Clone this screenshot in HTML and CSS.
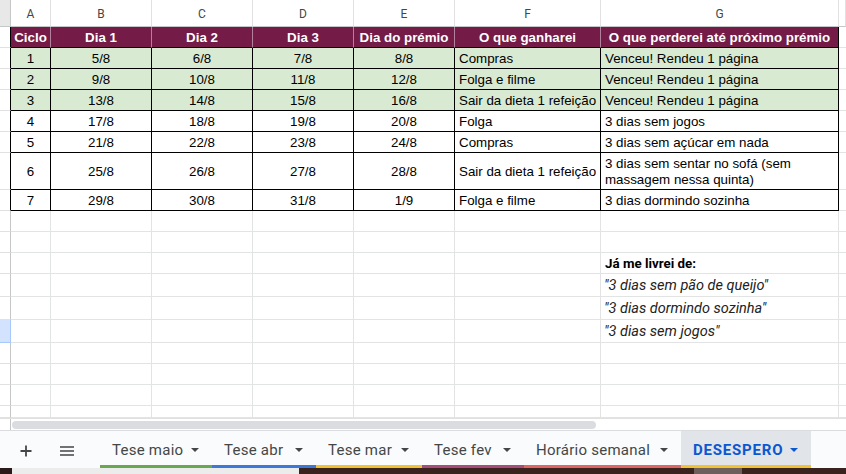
FILE: index.html
```html
<!DOCTYPE html>
<html lang="pt">
<head>
<meta charset="utf-8">
<title>DESESPERO</title>
<link rel="stylesheet" href="styles.css">
</head>
<body>
<div class="app">
  <div class="sheet">
    <div class="row r-colhdr">
      <div class="corner"></div>
      <div class="ch">A</div><div class="ch">B</div><div class="ch">C</div><div class="ch">D</div><div class="ch">E</div><div class="ch">F</div><div class="ch">G</div><div class="ch"></div>
    </div>
    <div class="row r21">
      <div class="rh tb"></div>
      <div class="c hd ctr">Ciclo</div><div class="c hd ctr">Dia 1</div><div class="c hd ctr">Dia 2</div><div class="c hd ctr">Dia 3</div><div class="c hd ctr">Dia do prémio</div><div class="c hd ctr">O que ganharei</div><div class="c hd ctr hd-last">O que perderei até próximo prémio</div><div class="c"></div>
    </div>
    <div class="row r21">
      <div class="rh tb"></div>
      <div class="c t g ctr">1</div><div class="c t g ctr">5/8</div><div class="c t g ctr">6/8</div><div class="c t g ctr">7/8</div><div class="c t g ctr">8/8</div><div class="c t g">Compras</div><div class="c t g">Venceu! Rendeu 1 página</div><div class="c"></div>
    </div>
    <div class="row r21">
      <div class="rh tb"></div>
      <div class="c t g ctr">2</div><div class="c t g ctr">9/8</div><div class="c t g ctr">10/8</div><div class="c t g ctr">11/8</div><div class="c t g ctr">12/8</div><div class="c t g">Folga e filme</div><div class="c t g">Venceu! Rendeu 1 página</div><div class="c"></div>
    </div>
    <div class="row r21">
      <div class="rh tb"></div>
      <div class="c t g ctr">3</div><div class="c t g ctr">13/8</div><div class="c t g ctr">14/8</div><div class="c t g ctr">15/8</div><div class="c t g ctr">16/8</div><div class="c t g">Sair da dieta 1 refeição</div><div class="c t g">Venceu! Rendeu 1 página</div><div class="c"></div>
    </div>
    <div class="row r21">
      <div class="rh tb"></div>
      <div class="c t ctr">4</div><div class="c t ctr">17/8</div><div class="c t ctr">18/8</div><div class="c t ctr">19/8</div><div class="c t ctr">20/8</div><div class="c t">Folga</div><div class="c t">3 dias sem jogos</div><div class="c"></div>
    </div>
    <div class="row r21">
      <div class="rh tb"></div>
      <div class="c t ctr">5</div><div class="c t ctr">21/8</div><div class="c t ctr">22/8</div><div class="c t ctr">23/8</div><div class="c t ctr">24/8</div><div class="c t">Compras</div><div class="c t">3 dias sem açúcar em nada</div><div class="c"></div>
    </div>
    <div class="row r37">
      <div class="rh tb"></div>
      <div class="c t ctr">6</div><div class="c t ctr">25/8</div><div class="c t ctr">26/8</div><div class="c t ctr">27/8</div><div class="c t ctr">28/8</div><div class="c t">Sair da dieta 1 refeição</div><div class="c t wrap">3 dias sem sentar no sofá (sem massagem nessa quinta)</div><div class="c"></div>
    </div>
    <div class="row r21">
      <div class="rh tb"></div>
      <div class="c t ctr">7</div><div class="c t ctr">29/8</div><div class="c t ctr">30/8</div><div class="c t ctr">31/8</div><div class="c t ctr">1/9</div><div class="c t">Folga e filme</div><div class="c t">3 dias dormindo sozinha</div><div class="c"></div>
    </div>
    <div class="row r21">
      <div class="rh"></div><div class="c"></div><div class="c"></div><div class="c"></div><div class="c"></div><div class="c"></div><div class="c"></div><div class="c"></div><div class="c"></div>
    </div>
    <div class="row r21">
      <div class="rh"></div><div class="c"></div><div class="c"></div><div class="c"></div><div class="c"></div><div class="c"></div><div class="c"></div><div class="c"></div><div class="c"></div>
    </div>
    <div class="row r21">
      <div class="rh"></div><div class="c"></div><div class="c"></div><div class="c"></div><div class="c"></div><div class="c"></div><div class="c"></div><div class="c note-title">Já me livrei de:</div><div class="c"></div>
    </div>
    <div class="row r23">
      <div class="rh"></div><div class="c"></div><div class="c"></div><div class="c"></div><div class="c"></div><div class="c"></div><div class="c"></div><div class="c note">"3 dias sem pão de queijo"</div><div class="c"></div>
    </div>
    <div class="row r23">
      <div class="rh"></div><div class="c"></div><div class="c"></div><div class="c"></div><div class="c"></div><div class="c"></div><div class="c"></div><div class="c note">"3 dias dormindo sozinha"</div><div class="c"></div>
    </div>
    <div class="row r23">
      <div class="rh sel"></div><div class="c"></div><div class="c"></div><div class="c"></div><div class="c"></div><div class="c"></div><div class="c"></div><div class="c note">"3 dias sem jogos"</div><div class="c"></div>
    </div>
    <div class="row r21">
      <div class="rh"></div><div class="c"></div><div class="c"></div><div class="c"></div><div class="c"></div><div class="c"></div><div class="c"></div><div class="c"></div><div class="c"></div>
    </div>
    <div class="row r21">
      <div class="rh"></div><div class="c"></div><div class="c"></div><div class="c"></div><div class="c"></div><div class="c"></div><div class="c"></div><div class="c"></div><div class="c"></div>
    </div>
    <div class="row r21">
      <div class="rh"></div><div class="c"></div><div class="c"></div><div class="c"></div><div class="c"></div><div class="c"></div><div class="c"></div><div class="c"></div><div class="c"></div>
    </div>
    <div class="row r12">
      <div class="rh"></div><div class="c"></div><div class="c"></div><div class="c"></div><div class="c"></div><div class="c"></div><div class="c"></div><div class="c"></div><div class="c"></div>
    </div>
  </div>

  <div class="hscroll">
    <div class="hs-left"></div>
    <div class="hs-thumb"></div>
  </div>

  <div class="tabs">
    <div class="icon-btn add">
      <svg width="12" height="12" viewBox="0 0 12 12"><path d="M6 0.5V11.5M0.5 6H11.5" stroke="#444746" stroke-width="1.8" fill="none"/></svg>
    </div>
    <div class="icon-btn menu">
      <svg width="14" height="10" viewBox="0 0 14 10"><path d="M0 1H14M0 5H14M0 9H14" stroke="#444746" stroke-width="1.6" fill="none"/></svg>
    </div>
    <div class="tab tab-green"><span>Tese maio</span><svg class="arr" width="8" height="4" viewBox="0 0 8 4"><polygon points="0,0 8,0 4,4" fill="#444746"/></svg></div>
    <div class="tab tab-blue"><span>Tese abr</span><svg class="arr" width="8" height="4" viewBox="0 0 8 4"><polygon points="0,0 8,0 4,4" fill="#444746"/></svg></div>
    <div class="tab tab-yellow"><span>Tese mar</span><svg class="arr" width="8" height="4" viewBox="0 0 8 4"><polygon points="0,0 8,0 4,4" fill="#444746"/></svg></div>
    <div class="tab tab-purple"><span>Tese fev</span><svg class="arr" width="8" height="4" viewBox="0 0 8 4"><polygon points="0,0 8,0 4,4" fill="#444746"/></svg></div>
    <div class="tab tab-red"><span>Horário semanal</span><svg class="arr" width="8" height="4" viewBox="0 0 8 4"><polygon points="0,0 8,0 4,4" fill="#444746"/></svg></div>
    <div class="tab tab-active"><span>DESESPERO</span><svg class="arr" width="8" height="4" viewBox="0 0 8 4"><polygon points="0,0 8,0 4,4" fill="#0b57d0"/></svg></div>
  </div>

  <div class="taskbar">
    <div class="tb-a"></div><div class="tb-b"></div><div class="tb-c"></div><div class="tb-d"></div><div class="tb-e"></div>
  </div>
</div>
</body>
</html>
```
FILE: styles.css
```css
* { box-sizing: border-box; }
html, body { margin: 0; padding: 0; }
body {
  width: 846px;
  height: 474px;
  overflow: hidden;
  background: #fff;
  font-family: "Liberation Sans", Arial, sans-serif;
  font-size: 13.33px;
  color: #000;
}
.app { width: 846px; height: 474px; display: flex; flex-direction: column; }

.sheet { height: 418px; overflow: hidden; }
.row {
  display: grid;
  grid-template-columns: 11px 40px 101px 101px 101px 101px 146px 238px 1fr;
}
.r-colhdr { height: 27px; }
.r21 { height: 21px; }
.r23 { height: 23px; }
.r37 { height: 37px; }
.r12 { height: 12px; }

.corner {
  background: #e8e8e8;
  border-right: 1px solid #c4c7c5;
  border-bottom: 1px solid #c4c7c5;
}
.ch {
  display: flex;
  align-items: center;
  justify-content: center;
  font-family: Roboto, "Liberation Sans", sans-serif;
  font-size: 12px;
  color: #444746;
  border-right: 1px solid #e1e1e1;
  border-bottom: 1px solid #c4c7c5;
  padding-top: 1px;
}
.rh {
  border-right: 1px solid #c4c7c5;
  border-bottom: 1px solid #e1e1e1;
}
.rh.tb { border-right-color: #000; }
.rh.sel { background: #d3e3fd; border-right-color: #a8c7fa; border-bottom-color: #a8c7fa; }

.c {
  display: flex;
  align-items: center;
  padding: 1px 3px 0 4px;
  white-space: nowrap;
  overflow: hidden;
  border-right: 1px solid #e2e3e3;
  border-bottom: 1px solid #e2e3e3;
}
.ctr { justify-content: center; padding-left: 3px; }
.t { border-right-color: #000; border-bottom-color: #000; }
.g { background: #d9ead3; }
.hd {
  background: #741b47;
  color: #fff;
  font-weight: bold;
  border-right-color: rgba(255, 255, 255, 0.45);
  border-bottom-color: #000;
}
.hd-last { border-right-color: #000; }
.wrap { white-space: normal; line-height: 16px; }

.note-title {
  font-family: Roboto, "Liberation Sans", sans-serif;
  font-weight: bold;
  font-size: 13.33px;
}
.note {
  font-family: Roboto, "Liberation Sans", sans-serif;
  font-style: italic;
  font-size: 14.5px;
  color: #222;
  padding-left: 3px;
}

.hscroll {
  height: 12px;
  display: flex;
  align-items: center;
  border-top: 1px solid #e1e1e1;
  background: #fff;
}
.hs-left { width: 11px; height: 100%; border-right: 1px solid #c4c7c5; }
.hs-thumb {
  width: 584px;
  height: 8px;
  margin-left: 1px;
  background: #dadce0;
  border-radius: 4px;
}

.tabs {
  height: 38px;
  display: flex;
  align-items: stretch;
  background: #f9fbfd;
  border-top: 1px solid #dadce0;
  font-family: Roboto, "Liberation Sans", sans-serif;
  font-size: 15px;
  letter-spacing: 0.25px;
  color: #444746;
}
.icon-btn {
  width: 32px;
  display: flex;
  align-items: center;
  justify-content: center;
  padding-top: 3px;
}
.icon-btn.add { margin-left: 10px; }
.icon-btn.menu { margin-left: 9px; margin-right: 17px; }
.tab {
  height: 37px;
  display: flex;
  align-items: center;
  justify-content: space-between;
  padding: 4px 13px 0 12px;
  border-bottom: 3px solid transparent;
  white-space: nowrap;
}
.tab .arr { flex: none; }
.tab-green { width: 112px; border-bottom-color: #6aa84f; }
.tab-blue { width: 104px; border-bottom-color: #3c78d8; }
.tab-yellow { width: 106px; border-bottom-color: #f1c232; }
.tab-purple { width: 102px; border-bottom-color: #a64d79; }
.tab-red { width: 157px; border-bottom-color: #e06666; }
.tab-active {
  width: 130px;
  background: #e1e5ea;
  color: #0b57d0;
  font-weight: bold;
  letter-spacing: 0.8px;
  border-bottom-color: #f1c232;
}

.taskbar { height: 6px; display: flex; }
.tb-a { width: 12px; background: #2c1a1a; }
.tb-b { width: 287px; background: #ececec; }
.tb-c { width: 395px; background: #3a221f; }
.tb-d { width: 48px; background: #6f5f5c; }
.tb-e { flex: 1; background: #3a221f; }
```
